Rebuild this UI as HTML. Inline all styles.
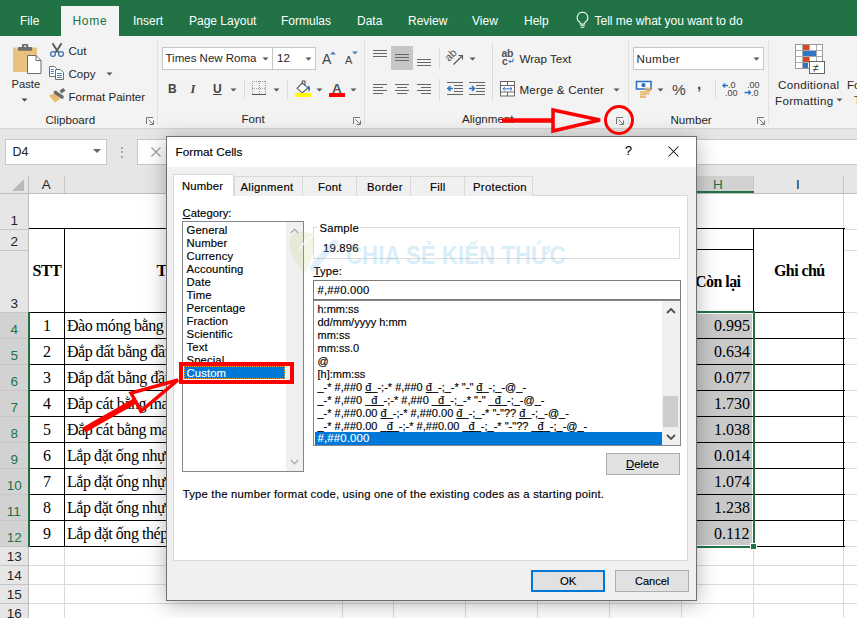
<!DOCTYPE html>
<html><head><meta charset="utf-8"><style>
html,body{margin:0;padding:0;}
body{width:857px;height:618px;overflow:hidden;position:relative;background:#fff;font-family:'Liberation Sans', sans-serif;}
.t{position:absolute;white-space:nowrap;}
.r{position:absolute;}
</style></head><body>
<div class="r" style="left:0px;top:0px;width:857px;height:36px;background:#217346"></div>
<div class="r" style="left:61px;top:6px;width:58px;height:30px;background:#f3f3f3"></div>
<div class="t" style="left:20px;top:14.84px;font-size:12px;line-height:12px;color:#ffffff;font-family:'Liberation Sans', sans-serif;font-weight:normal;letter-spacing:0px;">File</div>
<div class="t" style="left:72.5px;top:14.84px;font-size:12px;line-height:12px;color:#217346;font-family:'Liberation Sans', sans-serif;font-weight:normal;letter-spacing:0.7px;">Home</div>
<div class="t" style="left:133px;top:14.84px;font-size:12px;line-height:12px;color:#ffffff;font-family:'Liberation Sans', sans-serif;font-weight:normal;letter-spacing:0px;">Insert</div>
<div class="t" style="left:189px;top:14.84px;font-size:12px;line-height:12px;color:#ffffff;font-family:'Liberation Sans', sans-serif;font-weight:normal;letter-spacing:0px;">Page Layout</div>
<div class="t" style="left:281px;top:14.84px;font-size:12px;line-height:12px;color:#ffffff;font-family:'Liberation Sans', sans-serif;font-weight:normal;letter-spacing:0px;">Formulas</div>
<div class="t" style="left:357px;top:14.84px;font-size:12px;line-height:12px;color:#ffffff;font-family:'Liberation Sans', sans-serif;font-weight:normal;letter-spacing:0px;">Data</div>
<div class="t" style="left:408px;top:14.84px;font-size:12px;line-height:12px;color:#ffffff;font-family:'Liberation Sans', sans-serif;font-weight:normal;letter-spacing:0px;">Review</div>
<div class="t" style="left:472px;top:14.84px;font-size:12px;line-height:12px;color:#ffffff;font-family:'Liberation Sans', sans-serif;font-weight:normal;letter-spacing:0px;">View</div>
<div class="t" style="left:524px;top:14.84px;font-size:12px;line-height:12px;color:#ffffff;font-family:'Liberation Sans', sans-serif;font-weight:normal;letter-spacing:0px;">Help</div>
<svg class="r" style="left:575px;top:11px;" width="15" height="18" viewBox="0 0 15 18"><path d="M7.5 1.2a5.3 5.3 0 0 0-3.2 9.5c.7.6 1.1 1.4 1.1 2.3h4.2c0-.9.4-1.7 1.1-2.3a5.3 5.3 0 0 0-3.2-9.5z" fill="none" stroke="#fff" stroke-width="1.1"/><path d="M5.3 14.2h4.4M5.6 16.2h3.8" stroke="#fff" stroke-width="1.1"/></svg>
<div class="t" style="left:594.5px;top:14.84px;font-size:12px;line-height:12px;color:#ffffff;font-family:'Liberation Sans', sans-serif;font-weight:normal;letter-spacing:0px;">Tell me what you want to do</div>
<div class="r" style="left:0px;top:36px;width:857px;height:92px;background:#f3f3f3"></div>
<div class="r" style="left:0px;top:128px;width:857px;height:1px;background:#d5d5d5"></div>
<div class="r" style="left:157px;top:40px;width:1px;height:85px;background:#e1e1e1"></div>
<div class="r" style="left:364px;top:40px;width:1px;height:85px;background:#e1e1e1"></div>
<div class="r" style="left:628px;top:40px;width:1px;height:85px;background:#e1e1e1"></div>
<div class="r" style="left:768px;top:40px;width:1px;height:85px;background:#e1e1e1"></div>
<svg class="r" style="left:12px;top:43px;" width="30" height="32" viewBox="0 0 30 32"><rect x="1" y="4.5" width="24" height="24.5" rx="1" fill="#e9c27d"/><rect x="6" y="4" width="14.2" height="3.7" rx="0.8" fill="#6d6d6d"/><rect x="10" y="1" width="6.2" height="4" rx="1" fill="#6d6d6d"/><circle cx="13.1" cy="3.2" r="1" fill="#f3f3f3"/><path d="M15.5 12.5h8.5l5 5v13h-13.5z" fill="#fff" stroke="#6d6d6d" stroke-width="1"/><path d="M24 12.5v5h5" fill="none" stroke="#6d6d6d" stroke-width="1"/></svg>
<div class="t" style="left:11.5px;top:79.02px;font-size:11.2px;line-height:11.2px;color:#262626;font-family:'Liberation Sans', sans-serif;font-weight:normal;letter-spacing:0px;">Paste</div>
<svg class="r" style="left:21px;top:98px;" width="7" height="5" viewBox="0 0 7 5"><path d="M0.5 0.5h6l-3 3z" fill="#444"/></svg>
<svg class="r" style="left:49px;top:42px;" width="16" height="16" viewBox="0 0 16 16"><path d="M3.5 1.2C5 4 7 7 9.6 10.5M12.5 1.2C11 4 9 7 6.4 10.5" fill="none" stroke="#5a5a5a" stroke-width="1.9"/><circle cx="4" cy="12" r="2.4" fill="none" stroke="#3d6db3" stroke-width="1.2"/><circle cx="12" cy="12" r="2.4" fill="none" stroke="#3d6db3" stroke-width="1.2"/></svg>
<div class="t" style="left:68.5px;top:44.88px;font-size:11.6px;line-height:11.6px;color:#262626;font-family:'Liberation Sans', sans-serif;font-weight:normal;letter-spacing:0px;">Cut</div>
<svg class="r" style="left:49px;top:66px;" width="16" height="14" viewBox="0 0 16 14"><path d="M0.5 0.5h5l2 2v8h-7z" fill="#fff" stroke="#6d6d6d"/><path d="M1.8 3.5h3M1.8 5.5h3M1.8 7.5h3" stroke="#4a7fc1"/><path d="M6.5 3.5h5l3 3v7h-8z" fill="#fff" stroke="#6d6d6d"/><path d="M8 7.5h5M8 9.5h5M8 11.5h5" stroke="#4a7fc1"/></svg>
<div class="t" style="left:68.5px;top:68.38px;font-size:11.6px;line-height:11.6px;color:#262626;font-family:'Liberation Sans', sans-serif;font-weight:normal;letter-spacing:0px;">Copy</div>
<svg class="r" style="left:106px;top:72px;" width="7" height="5" viewBox="0 0 7 5"><path d="M0.5 0.5h6l-3 3z" fill="#555"/></svg>
<svg class="r" style="left:48px;top:87px;" width="19" height="17" viewBox="0 0 19 17"><path d="M1 8.5L7.5 6L12 12L7 15.5Z" fill="#e9bc6c"/><path d="M7.5 5.5L14 10" stroke="#6d6d6d" stroke-width="3.6" stroke-linecap="round"/><path d="M12.5 5L16.5 2.3" stroke="#6d6d6d" stroke-width="3.4"/></svg>
<div class="t" style="left:68.5px;top:90.68px;font-size:11.6px;line-height:11.6px;color:#262626;font-family:'Liberation Sans', sans-serif;font-weight:normal;letter-spacing:0px;">Format Painter</div>
<div class="t" style="left:45.5px;top:113.68px;font-size:11.6px;line-height:11.6px;color:#262626;font-family:'Liberation Sans', sans-serif;font-weight:normal;letter-spacing:0px;">Clipboard</div>
<svg class="r" style="left:146px;top:117px;" width="8" height="8" viewBox="0 0 8 8"><path d="M0.5 7V0.5H7" fill="none" stroke="#777"/><path d="M2.5 2.5L7 7M3.5 7.5H7.5V3.5" fill="none" stroke="#777"/></svg>
<div class="r" style="left:162px;top:47px;width:111px;height:23px;background:#fff;border:1px solid #c6c6c6;box-sizing:border-box"></div>
<div class="r" style="left:272px;top:47px;width:44px;height:23px;background:#fff;border:1px solid #c6c6c6;box-sizing:border-box"></div>
<div class="t" style="left:165.5px;top:53.07px;font-size:11.5px;line-height:11.5px;color:#262626;font-family:'Liberation Sans', sans-serif;font-weight:normal;letter-spacing:0px;">Times New Roma</div>
<div class="t" style="left:277px;top:53.07px;font-size:11.5px;line-height:11.5px;color:#262626;font-family:'Liberation Sans', sans-serif;font-weight:normal;letter-spacing:0px;">12</div>
<svg class="r" style="left:262px;top:57px;" width="7" height="4" viewBox="0 0 7 4"><path d="M0.5 0.5h6l-3 3z" fill="#555"/></svg>
<svg class="r" style="left:305px;top:57px;" width="7" height="4" viewBox="0 0 7 4"><path d="M0.5 0.5h6l-3 3z" fill="#555"/></svg>
<div class="t" style="left:322px;top:52.15px;font-size:14px;line-height:14px;color:#444;font-family:'Liberation Sans', sans-serif;font-weight:normal;letter-spacing:0px;">A</div>
<svg class="r" style="left:329.5px;top:50.5px;" width="6" height="4" viewBox="0 0 6 4"><path d="M0 3.5h6l-3-3z" fill="#4a7fc1"/></svg>
<div class="t" style="left:345px;top:54.69px;font-size:11px;line-height:11px;color:#444;font-family:'Liberation Sans', sans-serif;font-weight:normal;letter-spacing:0px;">A</div>
<svg class="r" style="left:352px;top:50.5px;" width="6" height="4" viewBox="0 0 6 4"><path d="M0 0.5h6l-3 3z" fill="#4a7fc1"/></svg>
<div class="t" style="left:168px;top:82.84px;font-size:12px;line-height:12px;color:#444;font-family:'Liberation Sans', sans-serif;font-weight:normal;letter-spacing:0px;"><b>B</b></div>
<div class="t" style="left:190.5px;top:82.53px;font-size:12.5px;line-height:12.5px;color:#444;font-family:'Liberation Serif', serif;font-weight:bold;letter-spacing:0px;"><i>I</i></div>
<div class="t" style="left:213px;top:82.84px;font-size:12px;line-height:12px;color:#444;font-family:'Liberation Sans', sans-serif;font-weight:bold;letter-spacing:0px;"><u>U</u></div>
<svg class="r" style="left:230px;top:88px;" width="7" height="4" viewBox="0 0 7 4"><path d="M0.5 0.5h6l-3 3z" fill="#555"/></svg>
<div class="r" style="left:244px;top:80px;width:1px;height:19px;background:#dadada"></div>
<svg class="r" style="left:252px;top:81px;shape-rendering:crispEdges" width="14" height="14" viewBox="0 0 14 14"><path d="M0.5 0v13M13.5 0v13M7 0v13" stroke="#999" stroke-dasharray="1 1"/><path d="M0 0.5h14M0 7h14" stroke="#999" stroke-dasharray="1 1"/><path d="M0 13.5h14" stroke="#555"/></svg>
<svg class="r" style="left:273px;top:88px;" width="7" height="4" viewBox="0 0 7 4"><path d="M0.5 0.5h6l-3 3z" fill="#555"/></svg>
<div class="r" style="left:287px;top:80px;width:1px;height:19px;background:#dadada"></div>
<svg class="r" style="left:294px;top:78px;" width="18" height="20" viewBox="0 0 18 20"><path d="M3 10.3L8.3 5L14 9.9L8.3 14.8Z" fill="#fff" stroke="#555" stroke-width="1.1"/><path d="M8.3 6V3H11V7" fill="none" stroke="#555" stroke-width="1.1"/><path d="M14.2 7.5c2.2 1 2.6 4 0.6 6.5L13.8 9.5z" fill="#2f74c5"/><rect x="1" y="15" width="16" height="4" fill="#ffff00"/></svg>
<svg class="r" style="left:316px;top:88px;" width="7" height="4" viewBox="0 0 7 4"><path d="M0.5 0.5h6l-3 3z" fill="#555"/></svg>
<div class="t" style="left:332px;top:81.57px;font-size:13.5px;line-height:13.5px;color:#555;font-family:'Liberation Sans', sans-serif;font-weight:bold;letter-spacing:0px;">A</div>
<div class="r" style="left:329px;top:93px;width:16px;height:4px;background:#f00"></div>
<svg class="r" style="left:350px;top:88px;" width="7" height="4" viewBox="0 0 7 4"><path d="M0.5 0.5h6l-3 3z" fill="#555"/></svg>
<div class="t" style="left:241.5px;top:113.48px;font-size:11.6px;line-height:11.6px;color:#262626;font-family:'Liberation Sans', sans-serif;font-weight:normal;letter-spacing:0px;">Font</div>
<svg class="r" style="left:353px;top:117px;" width="8" height="8" viewBox="0 0 8 8"><path d="M0.5 7V0.5H7" fill="none" stroke="#777"/><path d="M2.5 2.5L7 7M3.5 7.5H7.5V3.5" fill="none" stroke="#777"/></svg>
<svg class="r" style="left:373px;top:50px;" width="16" height="10" viewBox="0 0 16 10"><path d="M0 0.5h14M0 3.5h14M0 6.5h14" stroke="#666" stroke-width="1"/></svg>
<div class="r" style="left:391px;top:46px;width:22px;height:24px;background:#c6c6c6"></div>
<svg class="r" style="left:395px;top:54px;" width="16" height="10" viewBox="0 0 16 10"><path d="M0 0.5h14M0 3.5h14M0 6.5h14" stroke="#666" stroke-width="1"/></svg>
<svg class="r" style="left:417px;top:59px;" width="16" height="10" viewBox="0 0 16 10"><path d="M0 0.5h14M0 3.5h14M0 6.5h14" stroke="#666" stroke-width="1"/></svg>
<svg class="r" style="left:373px;top:84px;" width="16" height="13" viewBox="0 0 16 13"><path d="M0 0.5h14M0 3.5h10M0 6.5h14M0 9.5h10" stroke="#666" stroke-width="1"/></svg>
<svg class="r" style="left:395px;top:84px;" width="16" height="13" viewBox="0 0 16 13"><path d="M0 0.5h14M2 3.5h10M0 6.5h14M2 9.5h10" stroke="#666" stroke-width="1"/></svg>
<svg class="r" style="left:417px;top:84px;" width="16" height="13" viewBox="0 0 16 13"><path d="M0 0.5h14M4 3.5h10M0 6.5h14M4 9.5h10" stroke="#666" stroke-width="1"/></svg>
<div class="r" style="left:439px;top:48px;width:1px;height:21px;background:#dadada"></div>
<div class="r" style="left:439px;top:79px;width:1px;height:21px;background:#dadada"></div>
<svg class="r" style="left:444px;top:46px;" width="22" height="20" viewBox="0 0 22 20"><text x="0" y="0" font-family="Liberation Sans" font-size="11" fill="#555" transform="translate(5 16) rotate(-45)">ab</text><path d="M9.5 18.5L18.5 9.5M14.5 9.5h4v4" fill="none" stroke="#555" stroke-width="1.1"/></svg>
<svg class="r" style="left:469px;top:57px;" width="7" height="4" viewBox="0 0 7 4"><path d="M0.5 0.5h6l-3 3z" fill="#555"/></svg>
<svg class="r" style="left:447px;top:82px;" width="17" height="14" viewBox="0 0 17 14"><path d="M0 0.5h16M7 3.5h9M7 6.5h9M7 9.5h9M0 12.5h16" stroke="#666"/><path d="M1 6.5h5M3.5 4l-2.5 2.5 2.5 2.5" fill="none" stroke="#2f74c5" stroke-width="1.6"/></svg>
<svg class="r" style="left:469px;top:82px;" width="17" height="14" viewBox="0 0 17 14"><path d="M0 0.5h16M7 3.5h9M7 6.5h9M7 9.5h9M0 12.5h16" stroke="#666"/><path d="M0 6.5h5.5M3 4l2.5 2.5-2.5 2.5" fill="none" stroke="#2f74c5" stroke-width="1.6"/></svg>
<div class="r" style="left:492px;top:43px;width:1px;height:57px;background:#dadada"></div>
<svg class="r" style="left:500px;top:48px;" width="16" height="18" viewBox="0 0 16 18"><text x="1.5" y="9" font-family="Liberation Sans" font-size="10.5" fill="#555" font-weight="bold" letter-spacing="-0.3">ab</text><text x="2" y="16.5" font-family="Liberation Sans" font-size="10.5" font-weight="bold" fill="#555">c</text><path d="M13 10.5v3h-4M10.5 12l-1.5 1.5 1.5 1.5" fill="none" stroke="#2f74c5"/></svg>
<div class="t" style="left:519.5px;top:52.98px;font-size:11.6px;line-height:11.6px;color:#262626;font-family:'Liberation Sans', sans-serif;font-weight:normal;letter-spacing:0px;">Wrap Text</div>
<svg class="r" style="left:500px;top:81px;" width="16" height="16" viewBox="0 0 16 16"><rect x="0.5" y="0.5" width="14" height="14.5" fill="#fff" stroke="#666"/><path d="M0.5 4.5h14M0.5 11h14M7.5 0.5v4M7.5 11v4" stroke="#666"/><path d="M3 7.8h9M4.8 6l-1.8 1.8 1.8 1.8M10.2 6l1.8 1.8-1.8 1.8" fill="none" stroke="#2f74c5"/></svg>
<div class="t" style="left:519.5px;top:84.48px;font-size:11.6px;line-height:11.6px;color:#262626;font-family:'Liberation Sans', sans-serif;font-weight:normal;letter-spacing:0.2px;">Merge &amp; Center</div>
<svg class="r" style="left:613px;top:88px;" width="7" height="4" viewBox="0 0 7 4"><path d="M0.5 0.5h6l-3 3z" fill="#555"/></svg>
<div class="t" style="left:462px;top:113.18px;font-size:11.6px;line-height:11.6px;color:#262626;font-family:'Liberation Sans', sans-serif;font-weight:normal;letter-spacing:0px;">Alignment</div>
<svg class="r" style="left:616px;top:117px;" width="8" height="8" viewBox="0 0 8 8"><path d="M0.5 7V0.5H7" fill="none" stroke="#777"/><path d="M2.5 2.5L7 7M3.5 7.5H7.5V3.5" fill="none" stroke="#777"/></svg>
<div class="r" style="left:633px;top:47px;width:131px;height:23px;background:#fff;border:1px solid #c6c6c6;box-sizing:border-box"></div>
<div class="t" style="left:636.5px;top:53.18px;font-size:11.6px;line-height:11.6px;color:#262626;font-family:'Liberation Sans', sans-serif;font-weight:normal;letter-spacing:0.4px;">Number</div>
<svg class="r" style="left:753px;top:57px;" width="7" height="4" viewBox="0 0 7 4"><path d="M0.5 0.5h6l-3 3z" fill="#555"/></svg>
<svg class="r" style="left:635px;top:80px;" width="18" height="18" viewBox="0 0 18 18"><rect x="1.5" y="1.5" width="14.5" height="7.5" fill="#fff" stroke="#2f74c5" stroke-width="1.6"/><circle cx="8.5" cy="5.2" r="2.1" fill="#2f74c5"/><path d="M9.5 8.5h6M9.5 11h6M9.5 13.5h5" stroke="#e9b96e" stroke-width="1.8"/><path d="M5 12h6M5 14.5h6M5 17h6" stroke="#e9b96e" stroke-width="1.8"/><path d="M5 10.8h6" stroke="#fff" stroke-width="0.6"/></svg>
<svg class="r" style="left:657px;top:88px;" width="7" height="4" viewBox="0 0 7 4"><path d="M0.5 0.5h6l-3 3z" fill="#555"/></svg>
<div class="t" style="left:672px;top:82.38px;font-size:15.5px;line-height:15.5px;color:#444;font-family:'Liberation Sans', sans-serif;font-weight:normal;letter-spacing:0px;">%</div>
<div class="t" style="left:697px;top:79.80px;font-size:15px;line-height:15px;color:#444;font-family:'Liberation Sans', sans-serif;font-weight:bold;letter-spacing:0px;margin-top:-4px">,</div>
<div class="r" style="left:715px;top:80px;width:1px;height:19px;background:#dadada"></div>
<svg class="r" style="left:722px;top:81px;" width="17" height="16" viewBox="0 0 17 16"><text x="6" y="7" font-family="Liberation Sans" font-size="9" fill="#444">.0</text><text x="3" y="14.5" font-family="Liberation Sans" font-size="9" fill="#444">.00</text><path d="M1 4.5h5M3 2.5l-2 2 2 2" fill="none" stroke="#2f74c5" stroke-width="1.4"/></svg>
<svg class="r" style="left:744px;top:81px;" width="17" height="16" viewBox="0 0 17 16"><text x="3" y="7" font-family="Liberation Sans" font-size="9" fill="#444">.00</text><text x="7" y="14.5" font-family="Liberation Sans" font-size="9" fill="#444">.0</text><path d="M0.5 11.5h6M4.5 9.5l2 2-2 2" fill="none" stroke="#2f74c5" stroke-width="1.4"/></svg>
<div class="t" style="left:670.5px;top:114.18px;font-size:11.6px;line-height:11.6px;color:#262626;font-family:'Liberation Sans', sans-serif;font-weight:normal;letter-spacing:0px;">Number</div>
<svg class="r" style="left:757px;top:117px;" width="8" height="8" viewBox="0 0 8 8"><path d="M0.5 7V0.5H7" fill="none" stroke="#777"/><path d="M2.5 2.5L7 7M3.5 7.5H7.5V3.5" fill="none" stroke="#777"/></svg>
<svg class="r" style="left:795px;top:44px;" width="33" height="32" viewBox="0 0 33 32"><rect x="0.5" y="0.5" width="27" height="24" fill="#fff" stroke="#999"/><path d="M7.5 0.5v24M14.5 0.5v24M21.5 0.5v24M0.5 6.5h27M0.5 12.5h27M0.5 18.5h27" stroke="#aaa"/><rect x="8" y="1" width="6" height="5" fill="#d24726"/><rect x="8" y="7" width="13" height="5" fill="#2f74c5"/><rect x="8" y="13" width="6" height="5" fill="#d24726"/><rect x="8" y="19" width="5" height="5" fill="#2f74c5"/><rect x="14.5" y="17.5" width="15" height="12" fill="#fff" stroke="#666"/><text x="17.5" y="28" font-family="Liberation Sans" font-size="11.5" fill="#333">&#8800;</text></svg>
<div class="t" style="left:778px;top:78.98px;font-size:11.6px;line-height:11.6px;color:#262626;font-family:'Liberation Sans', sans-serif;font-weight:normal;letter-spacing:0.3px;">Conditional</div>
<div class="t" style="left:775px;top:95.18px;font-size:11.6px;line-height:11.6px;color:#262626;font-family:'Liberation Sans', sans-serif;font-weight:normal;letter-spacing:0.3px;">Formatting</div>
<svg class="r" style="left:836px;top:98px;" width="7" height="4" viewBox="0 0 7 4"><path d="M0.5 0.5h6l-3 3z" fill="#555"/></svg>
<div class="t" style="left:847px;top:78.98px;font-size:11.6px;line-height:11.6px;color:#262626;font-family:'Liberation Sans', sans-serif;font-weight:normal;letter-spacing:0px;">Fo</div>
<div class="t" style="left:854px;top:94.18px;font-size:11.6px;line-height:11.6px;color:#262626;font-family:'Liberation Sans', sans-serif;font-weight:normal;letter-spacing:0px;">T</div>
<div class="r" style="left:0px;top:129px;width:857px;height:47px;background:#e6e6e6"></div>
<div class="r" style="left:0px;top:128px;width:857px;height:2px;background:linear-gradient(#d0d0d0,#e6e6e6)"></div>
<div class="r" style="left:5px;top:139px;width:102px;height:26px;background:#fff;border:1px solid #c6c6c6;box-sizing:border-box"></div>
<div class="t" style="left:12.5px;top:145.92px;font-size:12.5px;line-height:12.5px;color:#222;font-family:'Liberation Sans', sans-serif;font-weight:normal;letter-spacing:0px;">D4</div>
<svg class="r" style="left:93px;top:149px;" width="8" height="5" viewBox="0 0 8 5"><path d="M0 0h8l-4 4z" fill="#666"/></svg>
<div class="r" style="left:121px;top:146.5px;width:2px;height:2px;background:#a8a8a8"></div>
<div class="r" style="left:121px;top:151px;width:2px;height:2px;background:#a8a8a8"></div>
<div class="r" style="left:121px;top:155.5px;width:2px;height:2px;background:#a8a8a8"></div>
<div class="r" style="left:137px;top:139px;width:740px;height:26px;background:#fff;border:1px solid #c6c6c6;box-sizing:border-box"></div>
<svg class="r" style="left:151px;top:147px;" width="10" height="10" viewBox="0 0 10 10"><path d="M0.5 0.5l9 9M9.5 0.5l-9 9" stroke="#a0a0a0" stroke-width="1.2"/></svg>
<div class="r" style="left:0px;top:176px;width:857px;height:18px;background:#e6e6e6"></div>
<div class="r" style="left:0px;top:193px;width:857px;height:1px;background:#bdbdbd"></div>
<div class="r" style="left:29px;top:194px;width:828px;height:424px;background:#fff"></div>
<div class="r" style="left:0px;top:194px;width:28px;height:424px;background:#e6e6e6"></div>
<div class="r" style="left:28px;top:176px;width:1px;height:442px;background:#bdbdbd"></div>
<div class="r" style="left:0px;top:312px;width:28px;height:234px;background:#d2d2d2"></div>
<svg class="r" style="left:12px;top:179px;" width="13" height="12" viewBox="0 0 13 12"><path d="M12 0v12h-12z" fill="#b9b9b9"/></svg>
<div class="r" style="left:64px;top:194px;width:1px;height:424px;background:#dadada"></div>
<div class="r" style="left:64px;top:176px;width:1px;height:17px;background:#c6c6c6"></div>
<div class="r" style="left:342px;top:194px;width:1px;height:424px;background:#dadada"></div>
<div class="r" style="left:342px;top:176px;width:1px;height:17px;background:#c6c6c6"></div>
<div class="r" style="left:393px;top:194px;width:1px;height:424px;background:#dadada"></div>
<div class="r" style="left:393px;top:176px;width:1px;height:17px;background:#c6c6c6"></div>
<div class="r" style="left:465px;top:194px;width:1px;height:424px;background:#dadada"></div>
<div class="r" style="left:465px;top:176px;width:1px;height:17px;background:#c6c6c6"></div>
<div class="r" style="left:537px;top:194px;width:1px;height:424px;background:#dadada"></div>
<div class="r" style="left:537px;top:176px;width:1px;height:17px;background:#c6c6c6"></div>
<div class="r" style="left:609px;top:194px;width:1px;height:424px;background:#dadada"></div>
<div class="r" style="left:609px;top:176px;width:1px;height:17px;background:#c6c6c6"></div>
<div class="r" style="left:681px;top:194px;width:1px;height:424px;background:#dadada"></div>
<div class="r" style="left:681px;top:176px;width:1px;height:17px;background:#c6c6c6"></div>
<div class="r" style="left:753px;top:194px;width:1px;height:424px;background:#dadada"></div>
<div class="r" style="left:753px;top:176px;width:1px;height:17px;background:#c6c6c6"></div>
<div class="r" style="left:843px;top:194px;width:1px;height:424px;background:#dadada"></div>
<div class="r" style="left:843px;top:176px;width:1px;height:17px;background:#c6c6c6"></div>
<div class="r" style="left:29px;top:229px;width:828px;height:1px;background:#dadada"></div>
<div class="r" style="left:0px;top:229px;width:28px;height:1px;background:#c6c6c6"></div>
<div class="r" style="left:29px;top:250px;width:828px;height:1px;background:#dadada"></div>
<div class="r" style="left:0px;top:250px;width:28px;height:1px;background:#c6c6c6"></div>
<div class="r" style="left:29px;top:312px;width:828px;height:1px;background:#dadada"></div>
<div class="r" style="left:0px;top:312px;width:28px;height:1px;background:#c6c6c6"></div>
<div class="r" style="left:29px;top:338px;width:828px;height:1px;background:#dadada"></div>
<div class="r" style="left:0px;top:338px;width:28px;height:1px;background:#c6c6c6"></div>
<div class="r" style="left:29px;top:364px;width:828px;height:1px;background:#dadada"></div>
<div class="r" style="left:0px;top:364px;width:28px;height:1px;background:#c6c6c6"></div>
<div class="r" style="left:29px;top:390px;width:828px;height:1px;background:#dadada"></div>
<div class="r" style="left:0px;top:390px;width:28px;height:1px;background:#c6c6c6"></div>
<div class="r" style="left:29px;top:416px;width:828px;height:1px;background:#dadada"></div>
<div class="r" style="left:0px;top:416px;width:28px;height:1px;background:#c6c6c6"></div>
<div class="r" style="left:29px;top:442px;width:828px;height:1px;background:#dadada"></div>
<div class="r" style="left:0px;top:442px;width:28px;height:1px;background:#c6c6c6"></div>
<div class="r" style="left:29px;top:468px;width:828px;height:1px;background:#dadada"></div>
<div class="r" style="left:0px;top:468px;width:28px;height:1px;background:#c6c6c6"></div>
<div class="r" style="left:29px;top:494px;width:828px;height:1px;background:#dadada"></div>
<div class="r" style="left:0px;top:494px;width:28px;height:1px;background:#c6c6c6"></div>
<div class="r" style="left:29px;top:520px;width:828px;height:1px;background:#dadada"></div>
<div class="r" style="left:0px;top:520px;width:28px;height:1px;background:#c6c6c6"></div>
<div class="r" style="left:29px;top:546px;width:828px;height:1px;background:#dadada"></div>
<div class="r" style="left:0px;top:546px;width:28px;height:1px;background:#c6c6c6"></div>
<div class="r" style="left:29px;top:565px;width:828px;height:1px;background:#dadada"></div>
<div class="r" style="left:0px;top:565px;width:28px;height:1px;background:#c6c6c6"></div>
<div class="r" style="left:29px;top:584px;width:828px;height:1px;background:#dadada"></div>
<div class="r" style="left:0px;top:584px;width:28px;height:1px;background:#c6c6c6"></div>
<div class="r" style="left:29px;top:603px;width:828px;height:1px;background:#dadada"></div>
<div class="r" style="left:0px;top:603px;width:28px;height:1px;background:#c6c6c6"></div>
<div class="t" style="left:10.45px;top:213.57px;font-size:13.5px;line-height:13.5px;color:#262626;font-family:'Liberation Sans', sans-serif;font-weight:normal;letter-spacing:0px;">1</div>
<div class="t" style="left:10.45px;top:234.57px;font-size:13.5px;line-height:13.5px;color:#262626;font-family:'Liberation Sans', sans-serif;font-weight:normal;letter-spacing:0px;">2</div>
<div class="t" style="left:10.45px;top:296.57px;font-size:13.5px;line-height:13.5px;color:#262626;font-family:'Liberation Sans', sans-serif;font-weight:normal;letter-spacing:0px;">3</div>
<div class="t" style="left:10.45px;top:322.57px;font-size:13.5px;line-height:13.5px;color:#217346;font-family:'Liberation Sans', sans-serif;font-weight:normal;letter-spacing:0px;">4</div>
<div class="t" style="left:10.45px;top:348.57px;font-size:13.5px;line-height:13.5px;color:#217346;font-family:'Liberation Sans', sans-serif;font-weight:normal;letter-spacing:0px;">5</div>
<div class="t" style="left:10.45px;top:374.57px;font-size:13.5px;line-height:13.5px;color:#217346;font-family:'Liberation Sans', sans-serif;font-weight:normal;letter-spacing:0px;">6</div>
<div class="t" style="left:10.45px;top:400.57px;font-size:13.5px;line-height:13.5px;color:#217346;font-family:'Liberation Sans', sans-serif;font-weight:normal;letter-spacing:0px;">7</div>
<div class="t" style="left:10.45px;top:426.57px;font-size:13.5px;line-height:13.5px;color:#217346;font-family:'Liberation Sans', sans-serif;font-weight:normal;letter-spacing:0px;">8</div>
<div class="t" style="left:10.45px;top:452.57px;font-size:13.5px;line-height:13.5px;color:#217346;font-family:'Liberation Sans', sans-serif;font-weight:normal;letter-spacing:0px;">9</div>
<div class="t" style="left:6.699999999999999px;top:478.57px;font-size:13.5px;line-height:13.5px;color:#217346;font-family:'Liberation Sans', sans-serif;font-weight:normal;letter-spacing:0px;">10</div>
<div class="t" style="left:6.699999999999999px;top:504.57px;font-size:13.5px;line-height:13.5px;color:#217346;font-family:'Liberation Sans', sans-serif;font-weight:normal;letter-spacing:0px;">11</div>
<div class="t" style="left:6.699999999999999px;top:530.57px;font-size:13.5px;line-height:13.5px;color:#217346;font-family:'Liberation Sans', sans-serif;font-weight:normal;letter-spacing:0px;">12</div>
<div class="t" style="left:6.699999999999999px;top:549.57px;font-size:13.5px;line-height:13.5px;color:#262626;font-family:'Liberation Sans', sans-serif;font-weight:normal;letter-spacing:0px;">13</div>
<div class="t" style="left:6.699999999999999px;top:568.57px;font-size:13.5px;line-height:13.5px;color:#262626;font-family:'Liberation Sans', sans-serif;font-weight:normal;letter-spacing:0px;">14</div>
<div class="t" style="left:6.699999999999999px;top:587.57px;font-size:13.5px;line-height:13.5px;color:#262626;font-family:'Liberation Sans', sans-serif;font-weight:normal;letter-spacing:0px;">15</div>
<div class="t" style="left:6.699999999999999px;top:606.57px;font-size:13.5px;line-height:13.5px;color:#262626;font-family:'Liberation Sans', sans-serif;font-weight:normal;letter-spacing:0px;">16</div>
<div class="t" style="left:41.7px;top:178.07px;font-size:13.5px;line-height:13.5px;color:#262626;font-family:'Liberation Sans', sans-serif;font-weight:normal;letter-spacing:0px;">A</div>
<div class="r" style="left:681px;top:176px;width:72px;height:17px;background:#d2d2d2"></div>
<div class="r" style="left:681px;top:191px;width:73px;height:2px;background:#217346"></div>
<div class="t" style="left:713px;top:178.07px;font-size:13.5px;line-height:13.5px;color:#217346;font-family:'Liberation Sans', sans-serif;font-weight:normal;letter-spacing:0px;">H</div>
<div class="t" style="left:796px;top:178.07px;font-size:13.5px;line-height:13.5px;color:#262626;font-family:'Liberation Sans', sans-serif;font-weight:normal;letter-spacing:0px;">I</div>
<div class="r" style="left:0px;top:176px;width:0px;height:0px;"></div>
<div class="r" style="left:29px;top:194px;width:814px;height:34px;background:#fff"></div>
<div class="r" style="left:29px;top:229px;width:35px;height:83px;background:#fff"></div>
<div class="r" style="left:65px;top:229px;width:616px;height:83px;background:#fff"></div>
<div class="r" style="left:754px;top:229px;width:89px;height:83px;background:#fff"></div>
<div class="r" style="left:681px;top:229px;width:72px;height:20px;background:#fff"></div>
<div class="r" style="left:681px;top:250px;width:72px;height:62px;background:#fff"></div>
<div class="r" style="left:29px;top:228px;width:816px;height:1px;background:#000"></div>
<div class="r" style="left:29px;top:312px;width:816px;height:1px;background:#000"></div>
<div class="r" style="left:29px;top:338px;width:816px;height:1px;background:#000"></div>
<div class="r" style="left:29px;top:364px;width:816px;height:1px;background:#000"></div>
<div class="r" style="left:29px;top:390px;width:816px;height:1px;background:#000"></div>
<div class="r" style="left:29px;top:416px;width:816px;height:1px;background:#000"></div>
<div class="r" style="left:29px;top:442px;width:816px;height:1px;background:#000"></div>
<div class="r" style="left:29px;top:468px;width:816px;height:1px;background:#000"></div>
<div class="r" style="left:29px;top:494px;width:816px;height:1px;background:#000"></div>
<div class="r" style="left:29px;top:520px;width:816px;height:1px;background:#000"></div>
<div class="r" style="left:29px;top:546px;width:816px;height:1px;background:#000"></div>
<div class="r" style="left:64px;top:228px;width:1px;height:319px;background:#000"></div>
<div class="r" style="left:753px;top:228px;width:1px;height:319px;background:#000"></div>
<div class="r" style="left:843px;top:228px;width:1px;height:319px;background:#000"></div>
<div class="r" style="left:681px;top:249px;width:73px;height:1px;background:#000"></div>
<div class="r" style="left:681px;top:314px;width:71px;height:231px;background:#c9c9c9"></div>
<div class="r" style="left:681px;top:338px;width:72px;height:1px;background:#000"></div>
<div class="r" style="left:681px;top:364px;width:72px;height:1px;background:#000"></div>
<div class="r" style="left:681px;top:390px;width:72px;height:1px;background:#000"></div>
<div class="r" style="left:681px;top:416px;width:72px;height:1px;background:#000"></div>
<div class="r" style="left:681px;top:442px;width:72px;height:1px;background:#000"></div>
<div class="r" style="left:681px;top:468px;width:72px;height:1px;background:#000"></div>
<div class="r" style="left:681px;top:494px;width:72px;height:1px;background:#000"></div>
<div class="r" style="left:681px;top:520px;width:72px;height:1px;background:#000"></div>
<div class="r" style="left:28px;top:312px;width:2px;height:235px;background:#217346"></div>
<div class="r" style="left:681px;top:311px;width:74px;height:2px;background:#217346"></div>
<div class="r" style="left:753px;top:311px;width:2px;height:236px;background:#217346"></div>
<div class="r" style="left:681px;top:546px;width:70px;height:2px;background:#217346"></div>
<div class="r" style="left:750px;top:543px;width:7px;height:7px;background:#217346;border:1px solid #fff;box-sizing:border-box"></div>
<div class="t" style="left:32.5px;top:262.60px;font-size:16px;line-height:16px;color:#000;font-family:'Liberation Serif', serif;font-weight:bold;letter-spacing:-0.5px;">STT</div>
<div class="t" style="left:156.5px;top:262.60px;font-size:16px;line-height:16px;color:#000;font-family:'Liberation Serif', serif;font-weight:bold;letter-spacing:0px;">T</div>
<div class="t" style="left:695px;top:273.60px;font-size:16px;line-height:16px;color:#000;font-family:'Liberation Serif', serif;font-weight:bold;letter-spacing:-0.55px;">Còn lại</div>
<div class="t" style="left:774px;top:262.60px;font-size:16px;line-height:16px;color:#000;font-family:'Liberation Serif', serif;font-weight:bold;letter-spacing:-0.6px;">Ghi chú</div>
<div class="t" style="left:43px;top:317.60px;font-size:16px;line-height:16px;color:#000;font-family:'Liberation Serif', serif;font-weight:normal;letter-spacing:0px;">1</div>
<div class="t" style="left:67px;top:317.60px;font-size:16px;line-height:16px;color:#000;font-family:'Liberation Serif', serif;font-weight:normal;letter-spacing:-0.45px;">Đào móng bằng máy</div>
<div class="t" style="left:714px;top:317.60px;font-size:16px;line-height:16px;color:#000;font-family:'Liberation Serif', serif;font-weight:normal;letter-spacing:0px;">0.995</div>
<div class="t" style="left:43px;top:343.60px;font-size:16px;line-height:16px;color:#000;font-family:'Liberation Serif', serif;font-weight:normal;letter-spacing:0px;">2</div>
<div class="t" style="left:67px;top:343.60px;font-size:16px;line-height:16px;color:#000;font-family:'Liberation Serif', serif;font-weight:normal;letter-spacing:-0.45px;">Đắp đất bằng đầm cóc</div>
<div class="t" style="left:714px;top:343.60px;font-size:16px;line-height:16px;color:#000;font-family:'Liberation Serif', serif;font-weight:normal;letter-spacing:0px;">0.634</div>
<div class="t" style="left:43px;top:369.60px;font-size:16px;line-height:16px;color:#000;font-family:'Liberation Serif', serif;font-weight:normal;letter-spacing:0px;">3</div>
<div class="t" style="left:67px;top:369.60px;font-size:16px;line-height:16px;color:#000;font-family:'Liberation Serif', serif;font-weight:normal;letter-spacing:-0.45px;">Đắp đất bằng đầm cóc</div>
<div class="t" style="left:714px;top:369.60px;font-size:16px;line-height:16px;color:#000;font-family:'Liberation Serif', serif;font-weight:normal;letter-spacing:0px;">0.077</div>
<div class="t" style="left:43px;top:395.60px;font-size:16px;line-height:16px;color:#000;font-family:'Liberation Serif', serif;font-weight:normal;letter-spacing:0px;">4</div>
<div class="t" style="left:67px;top:395.60px;font-size:16px;line-height:16px;color:#000;font-family:'Liberation Serif', serif;font-weight:normal;letter-spacing:-0.45px;">Đắp cát bằng mang</div>
<div class="t" style="left:714px;top:395.60px;font-size:16px;line-height:16px;color:#000;font-family:'Liberation Serif', serif;font-weight:normal;letter-spacing:0px;">1.730</div>
<div class="t" style="left:43px;top:421.60px;font-size:16px;line-height:16px;color:#000;font-family:'Liberation Serif', serif;font-weight:normal;letter-spacing:0px;">5</div>
<div class="t" style="left:67px;top:421.60px;font-size:16px;line-height:16px;color:#000;font-family:'Liberation Serif', serif;font-weight:normal;letter-spacing:-0.45px;">Đắp cát bằng mang</div>
<div class="t" style="left:714px;top:421.60px;font-size:16px;line-height:16px;color:#000;font-family:'Liberation Serif', serif;font-weight:normal;letter-spacing:0px;">1.038</div>
<div class="t" style="left:43px;top:447.60px;font-size:16px;line-height:16px;color:#000;font-family:'Liberation Serif', serif;font-weight:normal;letter-spacing:0px;">6</div>
<div class="t" style="left:67px;top:447.60px;font-size:16px;line-height:16px;color:#000;font-family:'Liberation Serif', serif;font-weight:normal;letter-spacing:-0.45px;">Lắp đặt ống nhựa</div>
<div class="t" style="left:714px;top:447.60px;font-size:16px;line-height:16px;color:#000;font-family:'Liberation Serif', serif;font-weight:normal;letter-spacing:0px;">0.014</div>
<div class="t" style="left:43px;top:473.60px;font-size:16px;line-height:16px;color:#000;font-family:'Liberation Serif', serif;font-weight:normal;letter-spacing:0px;">7</div>
<div class="t" style="left:67px;top:473.60px;font-size:16px;line-height:16px;color:#000;font-family:'Liberation Serif', serif;font-weight:normal;letter-spacing:-0.45px;">Lắp đặt ống nhựa</div>
<div class="t" style="left:714px;top:473.60px;font-size:16px;line-height:16px;color:#000;font-family:'Liberation Serif', serif;font-weight:normal;letter-spacing:0px;">1.074</div>
<div class="t" style="left:43px;top:499.60px;font-size:16px;line-height:16px;color:#000;font-family:'Liberation Serif', serif;font-weight:normal;letter-spacing:0px;">8</div>
<div class="t" style="left:67px;top:499.60px;font-size:16px;line-height:16px;color:#000;font-family:'Liberation Serif', serif;font-weight:normal;letter-spacing:-0.45px;">Lắp đặt ống nhựa</div>
<div class="t" style="left:714px;top:499.60px;font-size:16px;line-height:16px;color:#000;font-family:'Liberation Serif', serif;font-weight:normal;letter-spacing:0px;">1.238</div>
<div class="t" style="left:43px;top:525.60px;font-size:16px;line-height:16px;color:#000;font-family:'Liberation Serif', serif;font-weight:normal;letter-spacing:0px;">9</div>
<div class="t" style="left:67px;top:525.60px;font-size:16px;line-height:16px;color:#000;font-family:'Liberation Serif', serif;font-weight:normal;letter-spacing:-0.45px;">Lắp đặt ống thép</div>
<div class="t" style="left:714px;top:525.60px;font-size:16px;line-height:16px;color:#000;font-family:'Liberation Serif', serif;font-weight:normal;letter-spacing:0px;">0.112</div>
<div class="r" style="left:166px;top:136px;width:531px;height:465px;background:#f0f0f0;border:1px solid #707070;box-sizing:border-box;box-shadow:0 3px 20px rgba(0,0,0,0.30)"></div>
<div class="r" style="left:167px;top:137px;width:529px;height:30px;background:#fff"></div>
<div class="t" style="left:175.5px;top:146.51px;font-size:11.8px;line-height:11.8px;color:#000;font-family:'Liberation Sans', sans-serif;font-weight:normal;letter-spacing:0px;-webkit-text-stroke:0.15px currentColor;">Format Cells</div>
<div class="t" style="left:625px;top:145.42px;font-size:12.5px;line-height:12.5px;color:#000;font-family:'Liberation Sans', sans-serif;font-weight:normal;letter-spacing:0px;-webkit-text-stroke:0.15px currentColor;">?</div>
<svg class="r" style="left:668px;top:146px;" width="11" height="11" viewBox="0 0 11 11"><path d="M0.5 0.5l10 10M10.5 0.5l-10 10" stroke="#111" stroke-width="1.05"/></svg>
<div class="r" style="left:173px;top:195px;width:515px;height:366px;background:#fff;border:1px solid #d9d9d9;box-sizing:border-box"></div>
<div class="r" style="left:234px;top:176px;width:69px;height:20px;background:#f0f0f0;border:1px solid #d9d9d9;border-bottom:none;box-sizing:border-box"></div>
<div class="t" style="left:240.5px;top:182.43px;font-size:11.3px;line-height:11.3px;color:#000;font-family:'Liberation Sans', sans-serif;font-weight:normal;letter-spacing:0.3px;-webkit-text-stroke:0.15px currentColor;">Alignment</div>
<div class="r" style="left:302px;top:176px;width:55px;height:20px;background:#f0f0f0;border:1px solid #d9d9d9;border-bottom:none;box-sizing:border-box"></div>
<div class="t" style="left:318px;top:182.43px;font-size:11.3px;line-height:11.3px;color:#000;font-family:'Liberation Sans', sans-serif;font-weight:normal;letter-spacing:0.3px;-webkit-text-stroke:0.15px currentColor;">Font</div>
<div class="r" style="left:356px;top:176px;width:55px;height:20px;background:#f0f0f0;border:1px solid #d9d9d9;border-bottom:none;box-sizing:border-box"></div>
<div class="t" style="left:367px;top:182.43px;font-size:11.3px;line-height:11.3px;color:#000;font-family:'Liberation Sans', sans-serif;font-weight:normal;letter-spacing:0.3px;-webkit-text-stroke:0.15px currentColor;">Border</div>
<div class="r" style="left:410px;top:176px;width:55px;height:20px;background:#f0f0f0;border:1px solid #d9d9d9;border-bottom:none;box-sizing:border-box"></div>
<div class="t" style="left:430px;top:182.43px;font-size:11.3px;line-height:11.3px;color:#000;font-family:'Liberation Sans', sans-serif;font-weight:normal;letter-spacing:0.3px;-webkit-text-stroke:0.15px currentColor;">Fill</div>
<div class="r" style="left:464px;top:176px;width:69px;height:20px;background:#f0f0f0;border:1px solid #d9d9d9;border-bottom:none;box-sizing:border-box"></div>
<div class="t" style="left:473px;top:182.43px;font-size:11.3px;line-height:11.3px;color:#000;font-family:'Liberation Sans', sans-serif;font-weight:normal;letter-spacing:0.3px;-webkit-text-stroke:0.15px currentColor;">Protection</div>
<div class="r" style="left:173px;top:174px;width:61px;height:22px;background:#fff;border:1px solid #d9d9d9;border-bottom:none;box-sizing:border-box"></div>
<div class="t" style="left:182px;top:181.43px;font-size:11.3px;line-height:11.3px;color:#000;font-family:'Liberation Sans', sans-serif;font-weight:normal;letter-spacing:0.15px;-webkit-text-stroke:0.15px currentColor;">Number</div>
<div class="t" style="left:182.5px;top:207.73px;font-size:11.3px;line-height:11.3px;color:#000;font-family:'Liberation Sans', sans-serif;font-weight:normal;letter-spacing:0px;-webkit-text-stroke:0.15px currentColor;"><u>C</u>ategory:</div>
<div class="r" style="left:182px;top:221px;width:122px;height:251px;background:#fff;border:1px solid #828790;box-sizing:border-box"></div>
<div class="r" style="left:286px;top:222px;width:17px;height:249px;background:#f0f0f0"></div>
<svg class="r" style="left:290px;top:228px;" width="9" height="6" viewBox="0 0 9 6"><path d="M0.8 5l3.7-3.7 3.7 3.7" fill="none" stroke="#b0b0b0" stroke-width="1.6"/></svg>
<svg class="r" style="left:290px;top:459px;" width="9" height="6" viewBox="0 0 9 6"><path d="M0.8 1l3.7 3.7 3.7-3.7" fill="none" stroke="#b0b0b0" stroke-width="1.6"/></svg>
<div class="t" style="left:186.5px;top:225.23px;font-size:11.3px;line-height:11.3px;color:#000;font-family:'Liberation Sans', sans-serif;font-weight:normal;letter-spacing:0.1px;-webkit-text-stroke:0.15px currentColor;">General</div>
<div class="t" style="left:186.5px;top:238.23px;font-size:11.3px;line-height:11.3px;color:#000;font-family:'Liberation Sans', sans-serif;font-weight:normal;letter-spacing:0.1px;-webkit-text-stroke:0.15px currentColor;">Number</div>
<div class="t" style="left:186.5px;top:251.23px;font-size:11.3px;line-height:11.3px;color:#000;font-family:'Liberation Sans', sans-serif;font-weight:normal;letter-spacing:0.1px;-webkit-text-stroke:0.15px currentColor;">Currency</div>
<div class="t" style="left:186.5px;top:264.23px;font-size:11.3px;line-height:11.3px;color:#000;font-family:'Liberation Sans', sans-serif;font-weight:normal;letter-spacing:0.1px;-webkit-text-stroke:0.15px currentColor;">Accounting</div>
<div class="t" style="left:186.5px;top:277.23px;font-size:11.3px;line-height:11.3px;color:#000;font-family:'Liberation Sans', sans-serif;font-weight:normal;letter-spacing:0.1px;-webkit-text-stroke:0.15px currentColor;">Date</div>
<div class="t" style="left:186.5px;top:290.23px;font-size:11.3px;line-height:11.3px;color:#000;font-family:'Liberation Sans', sans-serif;font-weight:normal;letter-spacing:0.1px;-webkit-text-stroke:0.15px currentColor;">Time</div>
<div class="t" style="left:186.5px;top:303.23px;font-size:11.3px;line-height:11.3px;color:#000;font-family:'Liberation Sans', sans-serif;font-weight:normal;letter-spacing:0.1px;-webkit-text-stroke:0.15px currentColor;">Percentage</div>
<div class="t" style="left:186.5px;top:316.23px;font-size:11.3px;line-height:11.3px;color:#000;font-family:'Liberation Sans', sans-serif;font-weight:normal;letter-spacing:0.1px;-webkit-text-stroke:0.15px currentColor;">Fraction</div>
<div class="t" style="left:186.5px;top:329.23px;font-size:11.3px;line-height:11.3px;color:#000;font-family:'Liberation Sans', sans-serif;font-weight:normal;letter-spacing:0.1px;-webkit-text-stroke:0.15px currentColor;">Scientific</div>
<div class="t" style="left:186.5px;top:342.23px;font-size:11.3px;line-height:11.3px;color:#000;font-family:'Liberation Sans', sans-serif;font-weight:normal;letter-spacing:0.1px;-webkit-text-stroke:0.15px currentColor;">Text</div>
<div class="t" style="left:186.5px;top:355.23px;font-size:11.3px;line-height:11.3px;color:#000;font-family:'Liberation Sans', sans-serif;font-weight:normal;letter-spacing:0.1px;-webkit-text-stroke:0.15px currentColor;">Special</div>
<div class="r" style="left:184px;top:366px;width:101px;height:13px;background:#0078d7"></div>
<div class="r" style="left:184px;top:366px;width:101px;height:13px;border:1px dotted #f0a030;box-sizing:border-box"></div>
<div class="t" style="left:186.5px;top:368.23px;font-size:11.3px;line-height:11.3px;color:#fff;font-family:'Liberation Sans', sans-serif;font-weight:normal;letter-spacing:0.1px;-webkit-text-stroke:0.15px currentColor;">Custom</div>
<div class="r" style="left:313px;top:227px;width:367px;height:32px;border:1px solid #dcdcdc;box-sizing:border-box"></div>
<div class="r" style="left:317px;top:224px;width:42px;height:8px;background:#fff"></div>
<div class="t" style="left:319.5px;top:223.43px;font-size:11.3px;line-height:11.3px;color:#000;font-family:'Liberation Sans', sans-serif;font-weight:normal;letter-spacing:0.2px;-webkit-text-stroke:0.15px currentColor;">Sample</div>
<div class="t" style="left:323px;top:243.43px;font-size:11.3px;line-height:11.3px;color:#000;font-family:'Liberation Sans', sans-serif;font-weight:normal;letter-spacing:0.2px;-webkit-text-stroke:0.15px currentColor;">19.896</div>
<div class="t" style="left:313.5px;top:266.43px;font-size:11.3px;line-height:11.3px;color:#000;font-family:'Liberation Sans', sans-serif;font-weight:normal;letter-spacing:0.2px;-webkit-text-stroke:0.15px currentColor;"><u>T</u>ype:</div>
<div class="r" style="left:313px;top:280px;width:368px;height:20px;background:#fff;border:1px solid #7a7a7a;box-sizing:border-box"></div>
<div class="t" style="left:317.5px;top:285.43px;font-size:11.3px;line-height:11.3px;color:#000;font-family:'Liberation Sans', sans-serif;font-weight:normal;letter-spacing:0.2px;-webkit-text-stroke:0.15px currentColor;">#,##0.000</div>
<div class="r" style="left:313px;top:300px;width:368px;height:146px;background:#fff;border:1px solid #828790;box-sizing:border-box"></div>
<div class="r" style="left:662px;top:301px;width:18px;height:144px;background:#f0f0f0"></div>
<div class="r" style="left:663px;top:396px;width:15px;height:31px;background:#cdcdcd"></div>
<svg class="r" style="left:666px;top:307px;" width="10" height="7" viewBox="0 0 10 7"><path d="M1 6l4-4 4 4" fill="none" stroke="#505050" stroke-width="1.8"/></svg>
<svg class="r" style="left:666px;top:434px;" width="10" height="7" viewBox="0 0 10 7"><path d="M1 1l4 4 4-4" fill="none" stroke="#505050" stroke-width="1.8"/></svg>
<div class="r" style="left:314px;top:301px;width:348px;height:144px;overflow:hidden">
<div class="t" style="left:3.5px;top:2.99px;font-size:11px;line-height:11px;color:#000;font-family:'Liberation Sans', sans-serif;font-weight:normal;letter-spacing:0px;-webkit-text-stroke:0.15px currentColor;">h:mm:ss</div>
<div class="t" style="left:3.5px;top:15.94px;font-size:11px;line-height:11px;color:#000;font-family:'Liberation Sans', sans-serif;font-weight:normal;letter-spacing:0px;-webkit-text-stroke:0.15px currentColor;">dd/mm/yyyy h:mm</div>
<div class="t" style="left:3.5px;top:28.89px;font-size:11px;line-height:11px;color:#000;font-family:'Liberation Sans', sans-serif;font-weight:normal;letter-spacing:0px;-webkit-text-stroke:0.15px currentColor;">mm:ss</div>
<div class="t" style="left:3.5px;top:41.84px;font-size:11px;line-height:11px;color:#000;font-family:'Liberation Sans', sans-serif;font-weight:normal;letter-spacing:0px;-webkit-text-stroke:0.15px currentColor;">mm:ss.0</div>
<div class="t" style="left:3.5px;top:54.79px;font-size:11px;line-height:11px;color:#000;font-family:'Liberation Sans', sans-serif;font-weight:normal;letter-spacing:0px;-webkit-text-stroke:0.15px currentColor;">@</div>
<div class="t" style="left:3.5px;top:67.74px;font-size:11px;line-height:11px;color:#000;font-family:'Liberation Sans', sans-serif;font-weight:normal;letter-spacing:0px;-webkit-text-stroke:0.15px currentColor;">[h]:mm:ss</div>
<div class="t" style="left:3.5px;top:80.69px;font-size:11px;line-height:11px;color:#000;font-family:'Liberation Sans', sans-serif;font-weight:normal;letter-spacing:0px;-webkit-text-stroke:0.15px currentColor;">_-* #,##0 <span style="text-decoration:underline">đ</span>_-;-* #,##0 <span style="text-decoration:underline">đ</span>_-;_-* "-" <span style="text-decoration:underline">đ</span>_-;_-@_-</div>
<div class="t" style="left:3.5px;top:93.64px;font-size:11px;line-height:11px;color:#000;font-family:'Liberation Sans', sans-serif;font-weight:normal;letter-spacing:0px;-webkit-text-stroke:0.15px currentColor;">_-* #,##0 _<span style="text-decoration:underline">đ</span>_-;-* #,##0 _<span style="text-decoration:underline">đ</span>_-;_-* "-" _<span style="text-decoration:underline">đ</span>_-;_-@_-</div>
<div class="t" style="left:3.5px;top:106.59px;font-size:11px;line-height:11px;color:#000;font-family:'Liberation Sans', sans-serif;font-weight:normal;letter-spacing:0px;-webkit-text-stroke:0.15px currentColor;">_-* #,##0.00 <span style="text-decoration:underline">đ</span>_-;-* #,##0.00 <span style="text-decoration:underline">đ</span>_-;_-* "-"?? <span style="text-decoration:underline">đ</span>_-;_-@_-</div>
<div class="t" style="left:3.5px;top:119.54px;font-size:11px;line-height:11px;color:#000;font-family:'Liberation Sans', sans-serif;font-weight:normal;letter-spacing:0px;-webkit-text-stroke:0.15px currentColor;">_-* #,##0.00 _<span style="text-decoration:underline">đ</span>_-;-* #,##0.00 _<span style="text-decoration:underline">đ</span>_-;_-* "-"?? _<span style="text-decoration:underline">đ</span>_-;_-@_-</div>
</div>
<div class="r" style="left:315px;top:432px;width:347px;height:13px;background:#0078d7"></div>
<div class="t" style="left:317.5px;top:433.43px;font-size:11.3px;line-height:11.3px;color:#fff;font-family:'Liberation Sans', sans-serif;font-weight:normal;letter-spacing:0.2px;-webkit-text-stroke:0.15px currentColor;">#,##0.000</div>
<div class="r" style="left:606px;top:453px;width:74px;height:22px;background:#e1e1e1;border:1px solid #adadad;box-sizing:border-box"></div>
<div class="t" style="left:626px;top:459.43px;font-size:11.3px;line-height:11.3px;color:#000;font-family:'Liberation Sans', sans-serif;font-weight:normal;letter-spacing:0px;-webkit-text-stroke:0.15px currentColor;"><u>D</u>elete</div>
<div class="t" style="left:182.7px;top:488.93px;font-size:11.3px;line-height:11.3px;color:#000;font-family:'Liberation Sans', sans-serif;font-weight:normal;letter-spacing:0.21px;-webkit-text-stroke:0.15px currentColor;">Type the number format code, using one of the existing codes as a starting point.</div>
<div class="r" style="left:531px;top:570px;width:74px;height:22px;background:#e1e1e1;border:2px solid #0078d7;box-sizing:border-box"></div>
<div class="t" style="left:560px;top:575.93px;font-size:11.3px;line-height:11.3px;color:#000;font-family:'Liberation Sans', sans-serif;font-weight:normal;letter-spacing:0px;-webkit-text-stroke:0.15px currentColor;">OK</div>
<div class="r" style="left:615px;top:570px;width:74px;height:22px;background:#e1e1e1;border:1px solid #adadad;box-sizing:border-box"></div>
<div class="t" style="left:635px;top:576.19px;font-size:11px;line-height:11px;color:#000;font-family:'Liberation Sans', sans-serif;font-weight:normal;letter-spacing:0px;-webkit-text-stroke:0.15px currentColor;">Cancel</div>
<svg class="r" style="left:284px;top:222px;" width="60" height="60" viewBox="0 0 60 60"><path d="M6 16C10 9 21 9 30 12C31 28 27 40 22 50C12 44 3 30 6 16Z" fill="rgba(170,205,90,0.16)"/><path d="M15 27C20 21 24 17 30 13" stroke="rgba(255,255,255,0.6)" stroke-width="2" fill="none"/><path d="M29 46C35 38 42 30 51 21" stroke="rgba(110,185,230,0.22)" stroke-width="7" stroke-linecap="round" fill="none"/></svg>
<div class="t" style="left:346px;top:242.29px;font-size:26px;line-height:26px;color:rgba(120,195,235,0.30);font-family:'Liberation Sans', sans-serif;font-weight:bold;letter-spacing:0px;transform:scaleX(0.858);transform-origin:0 0;-webkit-text-stroke:0;">CHIA SẺ KIẾN THỨC</div>
<svg class="r" style="left:0px;top:0px;pointer-events:none" width="857" height="618" viewBox="0 0 857 618">
<g fill="none" stroke="#ff0000">
<rect x="181" y="364" width="111" height="18" stroke-width="4"/>
<path d="M84 430L135 401" stroke-width="6"/>
<path d="M178 380L131 393L141 411Z" stroke-width="3.5" stroke-linejoin="miter"/>
<path d="M502 120.5H552" stroke-width="4.5"/>
<path d="M553 110L600 120L553 131Z" stroke-width="3.5"/>
<circle cx="619" cy="120" r="13.5" stroke-width="3"/>
</g></svg>
</body></html>
